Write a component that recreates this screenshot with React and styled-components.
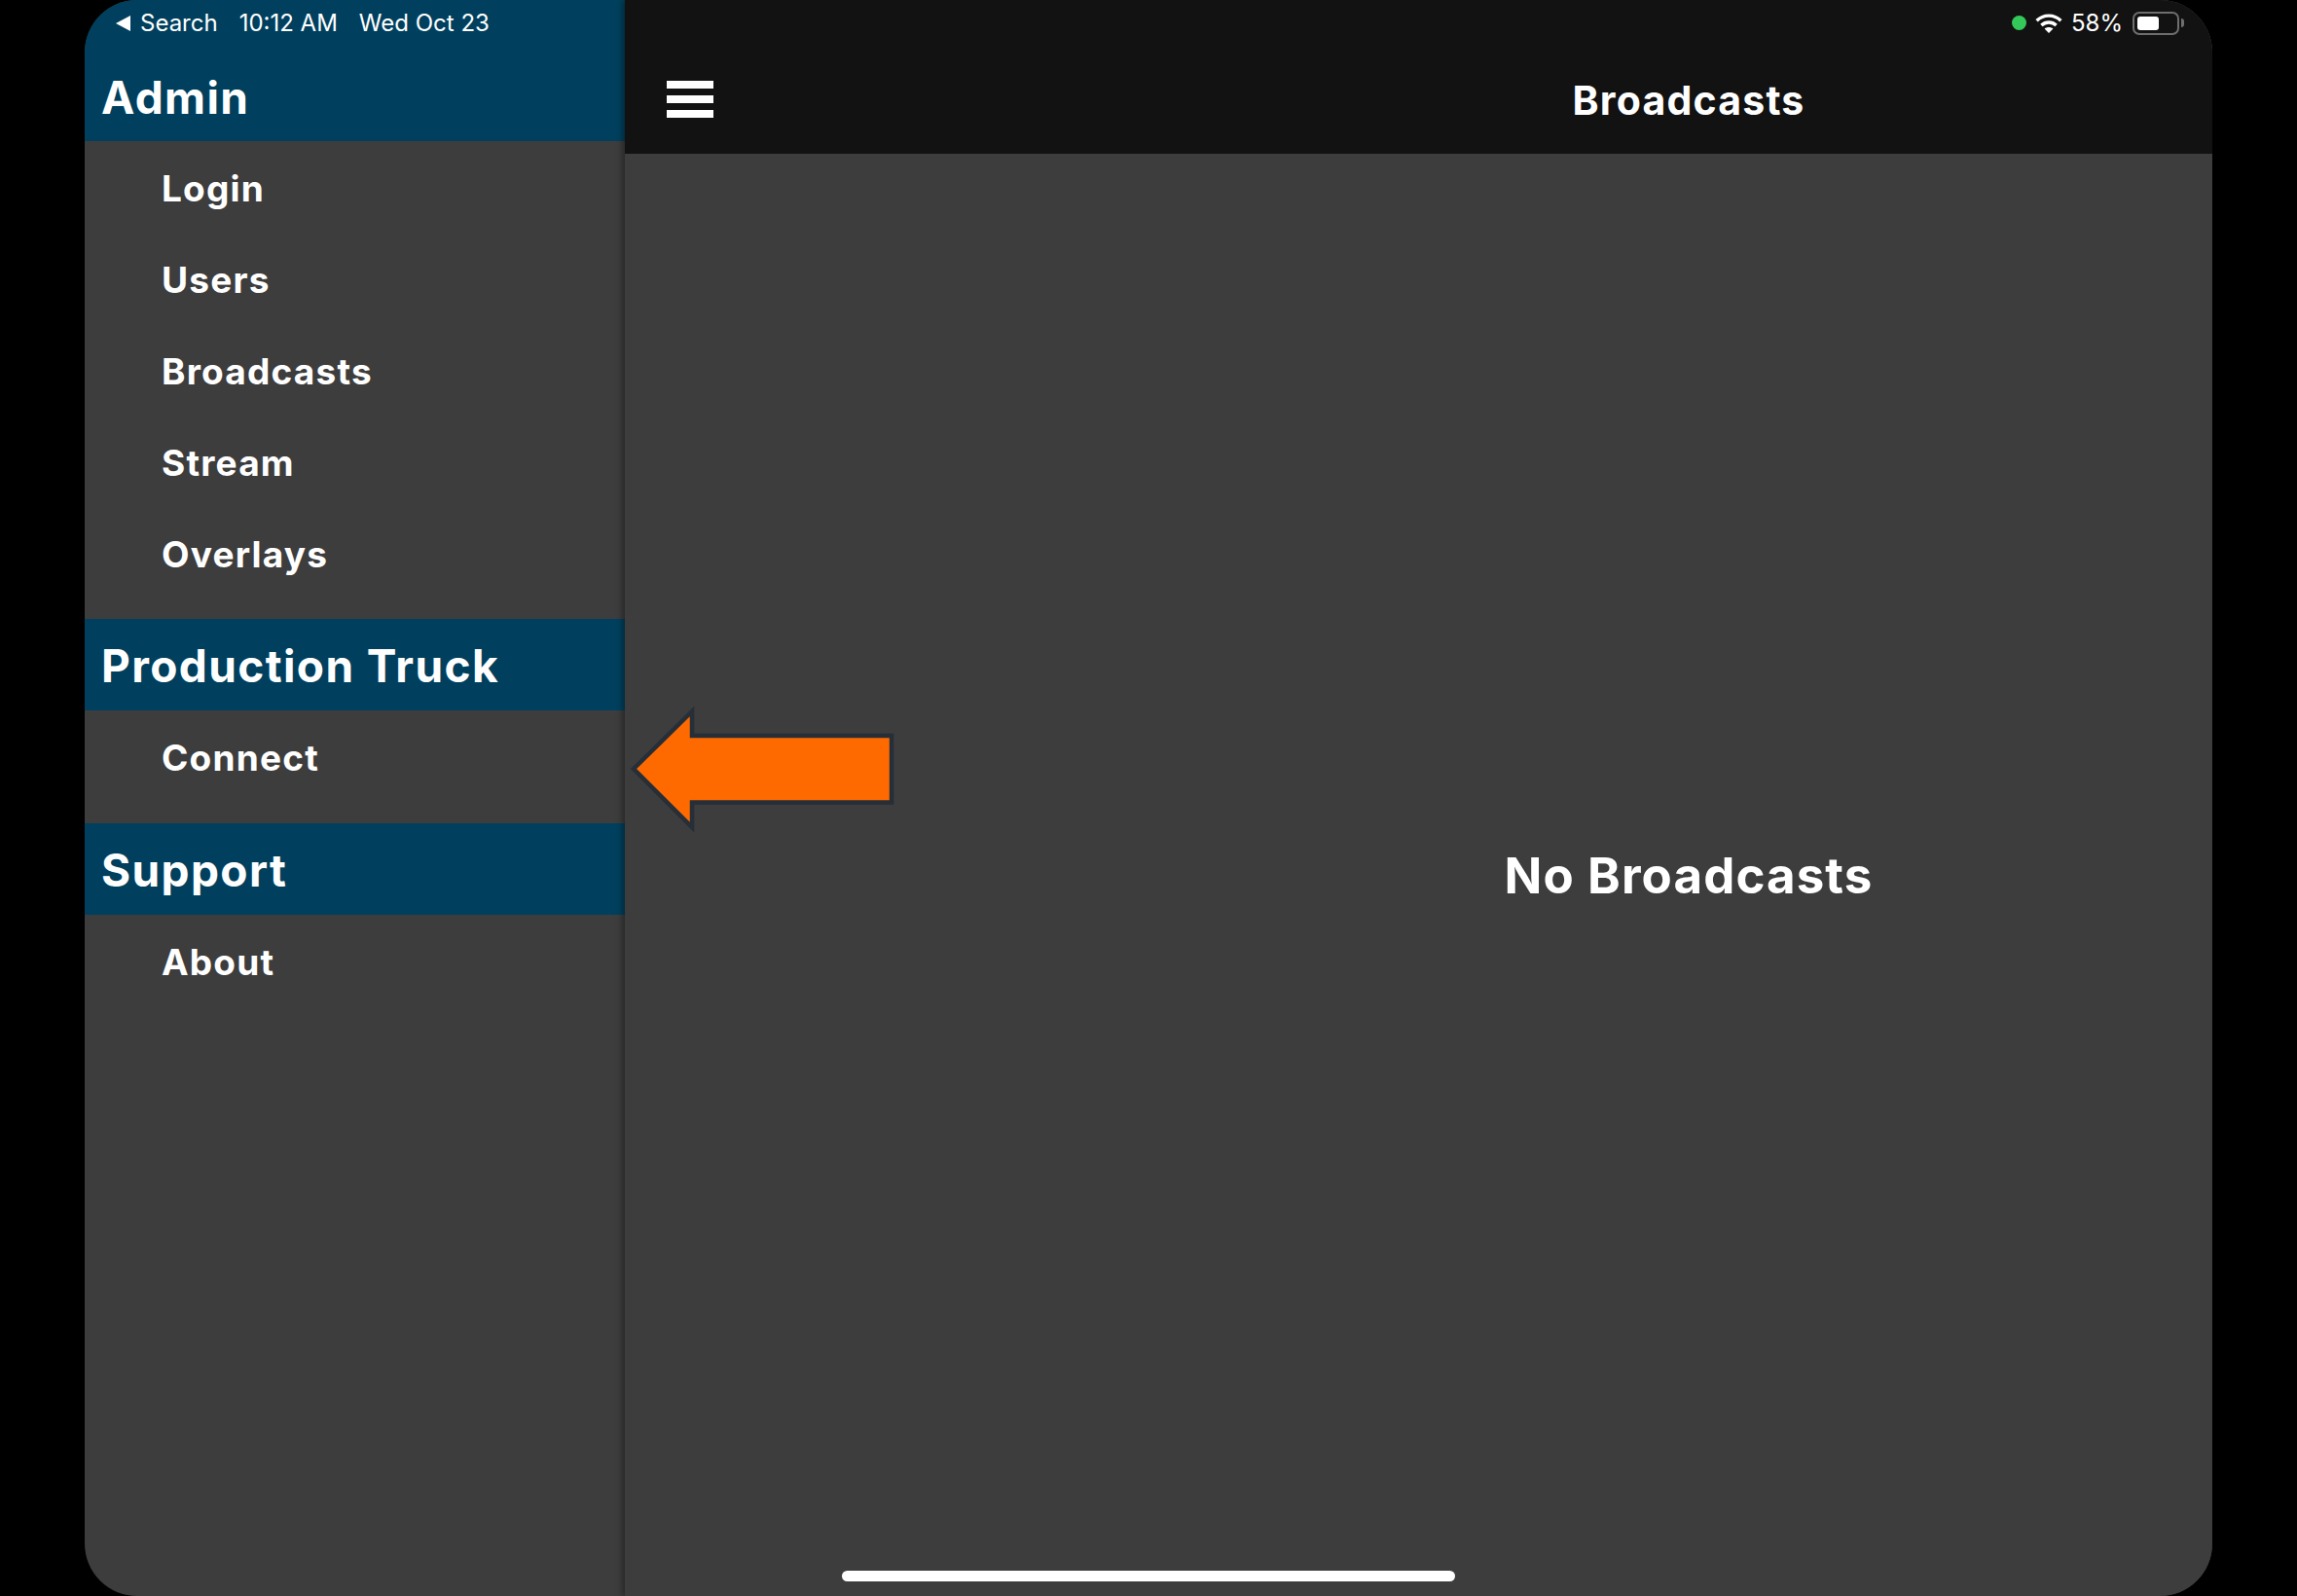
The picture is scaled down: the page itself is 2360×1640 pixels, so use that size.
import React from "react";
import styled, { createGlobalStyle } from "styled-components";

const sections = [
  { title: "Admin", first: true, items: ["Login", "Users", "Broadcasts", "Stream", "Overlays"] },
  { title: "Production Truck", items: ["Connect"] },
  { title: "Support", items: ["About"] },
];

export default function App() {
  return (
    <>
      <GlobalStyle />
      <Device>
        <Sidebar>
          {sections.map((section) => (
            <section key={section.title}>
              <SectionHeader $first={section.first}>{section.title}</SectionHeader>
              <SectionItems $first={section.first}>
                {section.items.map((item) => (
                  <NavItem key={item}>{item}</NavItem>
                ))}
              </SectionItems>
            </section>
          ))}
        </Sidebar>
        <Main>
          <TopBar>
            <Hamburger>
              <span />
              <span />
              <span />
            </Hamburger>
            <Title>Broadcasts</Title>
          </TopBar>
          <Content>
            <EmptyText>No Broadcasts</EmptyText>
          </Content>
        </Main>
        <StatusBar>
          <StatusLeft>
            <BackSearch>
              <svg width="15" height="16" viewBox="0 0 15 16">
                <path d="M15 0V16L0 8Z" fill="#fff" />
              </svg>
              Search
            </BackSearch>
            <span>10:12 AM</span>
            <span>Wed Oct 23</span>
          </StatusLeft>
          <StatusRight>
            <GreenDot />
            <svg width="28" height="20" viewBox="0 0 28 20" fill="none" stroke="#fff" strokeWidth="3.4">
              <path d="M1.6 7.2C8.6 .4 19.4 .4 26.4 7.2" />
              <path d="M6.4 12C10.6 8 17.4 8 21.6 12" />
              <path d="M14 20L9.6 15.4C12 13.4 16 13.4 18.4 15.4Z" fill="#fff" stroke="none" />
            </svg>
            <span>58%</span>
            <Battery>
              <BatteryFill $level={58} />
            </Battery>
          </StatusRight>
        </StatusBar>
        <Arrow viewBox="0 0 280 140" width="280" height="140">
          <path
            d="M6 70L66 11V36H271V104.5H66V130Z"
            fill="#ff6a00"
            stroke="#262e38"
            strokeWidth="4.5"
          />
        </Arrow>
        <HomeIndicator />
      </Device>
    </>
  );
}

const GlobalStyle = createGlobalStyle`
  html, body {
    margin: 0;
    background: #000;
  }
  * {
    box-sizing: border-box;
  }
`;

const Device = styled.div`
  position: relative;
  display: flex;
  width: 2186px;
  height: 1640px;
  margin: 0 auto;
  border-radius: 54px;
  overflow: hidden;
  background: #3d3d3d;
  color: #fff;
  font-family: "Inter", "Liberation Sans", sans-serif;
  font-weight: 700;
`;

const Sidebar = styled.nav`
  width: 555px;
  flex-shrink: 0;
`;

const SectionHeader = styled.h2`
  display: flex;
  align-items: center;
  height: ${(p) => (p.$first ? "145px" : "94px")};
  margin: 0;
  padding: ${(p) => (p.$first ? "54px" : "2px")} 0 0 17px;
  background: #00405e;
  font-size: 46px;
  font-weight: 700;
  letter-spacing: 1.4px;
`;

const SectionItems = styled.div`
  padding: 1px 0 ${(p) => (p.$first ? "20px" : "21px")};
`;

const NavItem = styled.div`
  display: flex;
  align-items: center;
  height: 94px;
  padding-left: 79px;
  font-size: 37px;
  letter-spacing: 1.2px;
`;

const Main = styled.main`
  position: relative;
  flex: 1;
  display: flex;
  flex-direction: column;
  box-shadow: -3px 0 6px rgba(0, 0, 0, 0.35);
  background: #3d3d3d;
`;

const TopBar = styled.header`
  display: flex;
  align-items: center;
  height: 158px;
  padding: 46px 0 0 43px;
  background: #121212;
`;

const Hamburger = styled.div`
  display: flex;
  flex-direction: column;
  gap: 7px;
  width: 48px;

  span {
    height: 8px;
    background: #fff;
  }
`;

const Title = styled.h1`
  flex: 1;
  margin: 0;
  padding: 1px 0 0 464px;
  text-align: center;
  font-size: 41px;
  font-weight: 700;
  letter-spacing: 1.2px;
`;

const Content = styled.div`
  flex: 1;
  display: flex;
  align-items: center;
  justify-content: center;
  padding-left: 555px;
`;

const EmptyText = styled.div`
  font-size: 51px;
  letter-spacing: 1.1px;
`;

const StatusBar = styled.div`
  position: absolute;
  top: 0;
  left: 0;
  right: 0;
  height: 47px;
  display: flex;
  align-items: center;
  justify-content: space-between;
  padding: 0 34px 0 32px;
  font-size: 24px;
  font-weight: 400;
`;

const StatusLeft = styled.div`
  display: flex;
  align-items: center;
  gap: 22px;
`;

const BackSearch = styled.span`
  display: flex;
  align-items: center;
  gap: 10px;
`;

const StatusRight = styled.div`
  display: flex;
  align-items: center;
  gap: 9px;
`;

const GreenDot = styled.span`
  width: 15px;
  height: 15px;
  border-radius: 50%;
  background: #34c759;
`;

const Battery = styled.span`
  position: relative;
  width: 48px;
  height: 24px;
  margin-left: 1px;
  padding: 3px;
  border: 2px solid #6e6e6e;
  border-radius: 7px;

  &::after {
    content: "";
    position: absolute;
    top: 5px;
    right: -7px;
    width: 3px;
    height: 9px;
    border-radius: 0 3px 3px 0;
    background: #6e6e6e;
  }
`;

const BatteryFill = styled.span`
  display: block;
  width: ${(p) => p.$level}%;
  height: 100%;
  border-radius: 3px;
  background: #fff;
`;

const Arrow = styled.svg`
  position: absolute;
  left: 558px;
  top: 720px;
`;

const HomeIndicator = styled.div`
  position: absolute;
  left: 778px;
  bottom: 15px;
  width: 630px;
  height: 11px;
  border-radius: 6px;
  background: #fff;
`;
